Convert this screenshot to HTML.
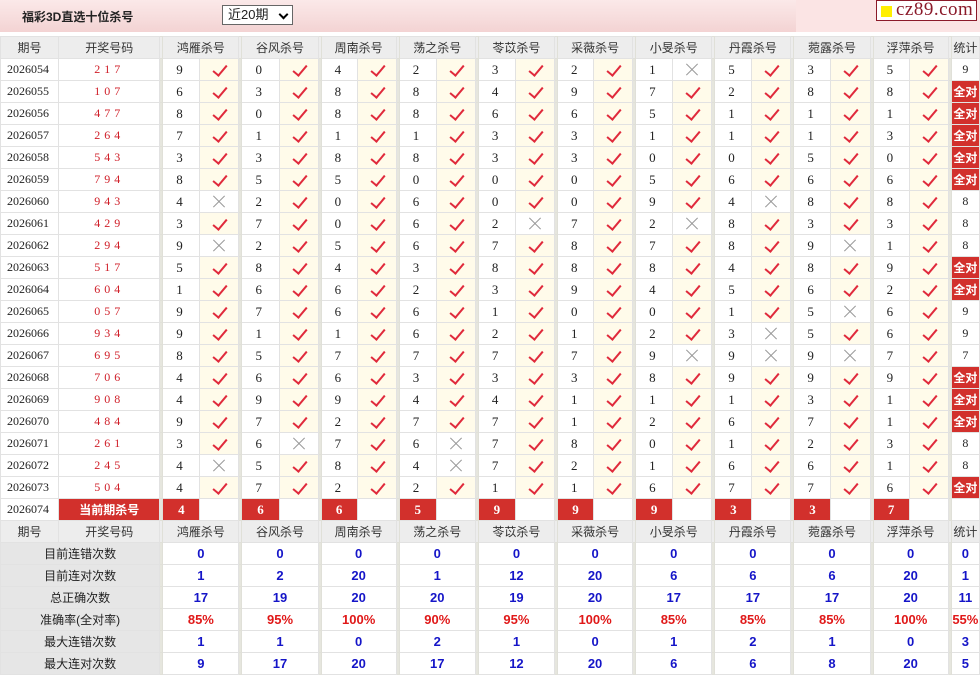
<!DOCTYPE html>
<html><head><meta charset="utf-8"><style>
body{margin:0;background:#fff;font-family:"Liberation Sans","Noto Sans CJK SC",sans-serif;font-size:12px;color:#222;width:980px;height:674px;overflow:hidden;position:relative}
.top{position:absolute;left:0;top:0;width:796px;height:32px;background:linear-gradient(#fbe9e9,#f3d3d3)}
.title{position:absolute;left:22px;top:8px;font-weight:bold;font-size:12px;color:#222}
.sel{position:absolute;left:222px;top:5px;border:1px solid #666;background:#fff;font-size:13px;line-height:18px;padding-left:5px;box-sizing:border-box;width:71px;height:20px}
.sel b{position:absolute;right:5px;top:5px;width:5px;height:5px;border-right:2px solid #000;border-bottom:2px solid #000;transform:rotate(45deg)}
.pinkr{position:absolute;left:796px;top:0;width:184px;height:32px;background:#fbe4e4}
.logo{position:absolute;left:876px;top:0;width:101px;height:21px;border:1px solid #8b1a2a;background:#fff;box-sizing:border-box}
.logo i{position:absolute;left:4px;top:5px;width:11px;height:11px;background:#ffef00}
.logo span{position:absolute;left:19px;top:-2px;font-family:"Liberation Serif",serif;font-size:19px;color:#8b1a2a;letter-spacing:0.5px}
table{position:absolute;left:0;top:36px;border-collapse:collapse;table-layout:fixed;width:980px}
td{height:21px;border:1px solid #e2e2e2;padding:0;text-align:center;white-space:nowrap;overflow:hidden;font-size:12px}
tr.h td{background:#ededed;color:#333;font-size:12px}
td.s{background:#e6e6de;border-color:#e0e0d8}
td.q{font-family:"Liberation Serif",serif;font-size:12px;text-align:left;padding-left:6px}
td.w{font-family:"Liberation Serif",serif;color:#d0202a;letter-spacing:4px;font-size:12px}
td.n{font-family:"Liberation Serif",serif;font-size:13px;text-align:left;padding-left:13px}
td.y{background:#fffbea}
td.k{position:relative}
td.y:after{content:"";position:absolute;left:16px;top:3px;width:6px;height:12px;border-right:2px solid #e02a3c;border-bottom:2px solid #e02a3c;transform:rotate(40deg)}
td.x{position:relative}
td.x:before,td.x:after{content:"";position:absolute;left:11px;top:10px;width:16px;height:1px;background:#999;transform:rotate(45deg)}
td.x:after{transform:rotate(-45deg)}
td.t{font-family:"Liberation Serif",serif;font-size:12px}
td.a{background:#d2302c;color:#fff;font-weight:bold;font-size:12px}
td.r{background:#d2302c;color:#fff;font-weight:bold;font-family:"Liberation Serif",serif;font-size:13px}
td.c{background:#d2302c;color:#fff;font-weight:bold}
td.l{background:#e6e6e6;color:#222}
td.v{color:#1515c8;font-weight:bold;font-size:13px}
td.p{color:#e01818;font-weight:bold;font-size:13px}
</style></head><body>
<div class="top"><div class="title">福彩3D直选十位杀号</div><div class="sel">近20期<b></b></div></div>
<div class="pinkr"></div>
<div class="logo"><i></i><span>cz89.com</span></div>
<table>
<colgroup><col style="width:58px"><col style="width:101px"><col style="width:3px">
<col style="width:37px"><col style="width:39px"><col style="width:3px">
<col style="width:37px"><col style="width:39px"><col style="width:3px">
<col style="width:36px"><col style="width:39px"><col style="width:3px">
<col style="width:37px"><col style="width:39px"><col style="width:3px">
<col style="width:37px"><col style="width:39px"><col style="width:3px">
<col style="width:36px"><col style="width:39px"><col style="width:3px">
<col style="width:37px"><col style="width:39px"><col style="width:3px">
<col style="width:37px"><col style="width:39px"><col style="width:3px">
<col style="width:37px"><col style="width:39px"><col style="width:3px">
<col style="width:36px"><col style="width:39px"><col style="width:3px">
<col style="width:28px"></colgroup>
<tr class="h"><td>期号</td><td>开奖号码</td><td class="s"></td><td colspan="2">鸿雁杀号</td><td class="s"></td><td colspan="2">谷风杀号</td><td class="s"></td><td colspan="2">周南杀号</td><td class="s"></td><td colspan="2">荡之杀号</td><td class="s"></td><td colspan="2">苓苡杀号</td><td class="s"></td><td colspan="2">采薇杀号</td><td class="s"></td><td colspan="2">小旻杀号</td><td class="s"></td><td colspan="2">丹霞杀号</td><td class="s"></td><td colspan="2">菀露杀号</td><td class="s"></td><td colspan="2">浮萍杀号</td><td class="s"></td><td>统计</td></tr>
<tr><td class="q">2026054</td><td class="w">217</td><td class="s"></td><td class="n">9</td><td class="k y"></td><td class="s"></td><td class="n">0</td><td class="k y"></td><td class="s"></td><td class="n">4</td><td class="k y"></td><td class="s"></td><td class="n">2</td><td class="k y"></td><td class="s"></td><td class="n">3</td><td class="k y"></td><td class="s"></td><td class="n">2</td><td class="k y"></td><td class="s"></td><td class="n">1</td><td class="x"></td><td class="s"></td><td class="n">5</td><td class="k y"></td><td class="s"></td><td class="n">3</td><td class="k y"></td><td class="s"></td><td class="n">5</td><td class="k y"></td><td class="s"></td><td class="t">9</td></tr>
<tr><td class="q">2026055</td><td class="w">107</td><td class="s"></td><td class="n">6</td><td class="k y"></td><td class="s"></td><td class="n">3</td><td class="k y"></td><td class="s"></td><td class="n">8</td><td class="k y"></td><td class="s"></td><td class="n">8</td><td class="k y"></td><td class="s"></td><td class="n">4</td><td class="k y"></td><td class="s"></td><td class="n">9</td><td class="k y"></td><td class="s"></td><td class="n">7</td><td class="k y"></td><td class="s"></td><td class="n">2</td><td class="k y"></td><td class="s"></td><td class="n">8</td><td class="k y"></td><td class="s"></td><td class="n">8</td><td class="k y"></td><td class="s"></td><td class="a">全对</td></tr>
<tr><td class="q">2026056</td><td class="w">477</td><td class="s"></td><td class="n">8</td><td class="k y"></td><td class="s"></td><td class="n">0</td><td class="k y"></td><td class="s"></td><td class="n">8</td><td class="k y"></td><td class="s"></td><td class="n">8</td><td class="k y"></td><td class="s"></td><td class="n">6</td><td class="k y"></td><td class="s"></td><td class="n">6</td><td class="k y"></td><td class="s"></td><td class="n">5</td><td class="k y"></td><td class="s"></td><td class="n">1</td><td class="k y"></td><td class="s"></td><td class="n">1</td><td class="k y"></td><td class="s"></td><td class="n">1</td><td class="k y"></td><td class="s"></td><td class="a">全对</td></tr>
<tr><td class="q">2026057</td><td class="w">264</td><td class="s"></td><td class="n">7</td><td class="k y"></td><td class="s"></td><td class="n">1</td><td class="k y"></td><td class="s"></td><td class="n">1</td><td class="k y"></td><td class="s"></td><td class="n">1</td><td class="k y"></td><td class="s"></td><td class="n">3</td><td class="k y"></td><td class="s"></td><td class="n">3</td><td class="k y"></td><td class="s"></td><td class="n">1</td><td class="k y"></td><td class="s"></td><td class="n">1</td><td class="k y"></td><td class="s"></td><td class="n">1</td><td class="k y"></td><td class="s"></td><td class="n">3</td><td class="k y"></td><td class="s"></td><td class="a">全对</td></tr>
<tr><td class="q">2026058</td><td class="w">543</td><td class="s"></td><td class="n">3</td><td class="k y"></td><td class="s"></td><td class="n">3</td><td class="k y"></td><td class="s"></td><td class="n">8</td><td class="k y"></td><td class="s"></td><td class="n">8</td><td class="k y"></td><td class="s"></td><td class="n">3</td><td class="k y"></td><td class="s"></td><td class="n">3</td><td class="k y"></td><td class="s"></td><td class="n">0</td><td class="k y"></td><td class="s"></td><td class="n">0</td><td class="k y"></td><td class="s"></td><td class="n">5</td><td class="k y"></td><td class="s"></td><td class="n">0</td><td class="k y"></td><td class="s"></td><td class="a">全对</td></tr>
<tr><td class="q">2026059</td><td class="w">794</td><td class="s"></td><td class="n">8</td><td class="k y"></td><td class="s"></td><td class="n">5</td><td class="k y"></td><td class="s"></td><td class="n">5</td><td class="k y"></td><td class="s"></td><td class="n">0</td><td class="k y"></td><td class="s"></td><td class="n">0</td><td class="k y"></td><td class="s"></td><td class="n">0</td><td class="k y"></td><td class="s"></td><td class="n">5</td><td class="k y"></td><td class="s"></td><td class="n">6</td><td class="k y"></td><td class="s"></td><td class="n">6</td><td class="k y"></td><td class="s"></td><td class="n">6</td><td class="k y"></td><td class="s"></td><td class="a">全对</td></tr>
<tr><td class="q">2026060</td><td class="w">943</td><td class="s"></td><td class="n">4</td><td class="x"></td><td class="s"></td><td class="n">2</td><td class="k y"></td><td class="s"></td><td class="n">0</td><td class="k y"></td><td class="s"></td><td class="n">6</td><td class="k y"></td><td class="s"></td><td class="n">0</td><td class="k y"></td><td class="s"></td><td class="n">0</td><td class="k y"></td><td class="s"></td><td class="n">9</td><td class="k y"></td><td class="s"></td><td class="n">4</td><td class="x"></td><td class="s"></td><td class="n">8</td><td class="k y"></td><td class="s"></td><td class="n">8</td><td class="k y"></td><td class="s"></td><td class="t">8</td></tr>
<tr><td class="q">2026061</td><td class="w">429</td><td class="s"></td><td class="n">3</td><td class="k y"></td><td class="s"></td><td class="n">7</td><td class="k y"></td><td class="s"></td><td class="n">0</td><td class="k y"></td><td class="s"></td><td class="n">6</td><td class="k y"></td><td class="s"></td><td class="n">2</td><td class="x"></td><td class="s"></td><td class="n">7</td><td class="k y"></td><td class="s"></td><td class="n">2</td><td class="x"></td><td class="s"></td><td class="n">8</td><td class="k y"></td><td class="s"></td><td class="n">3</td><td class="k y"></td><td class="s"></td><td class="n">3</td><td class="k y"></td><td class="s"></td><td class="t">8</td></tr>
<tr><td class="q">2026062</td><td class="w">294</td><td class="s"></td><td class="n">9</td><td class="x"></td><td class="s"></td><td class="n">2</td><td class="k y"></td><td class="s"></td><td class="n">5</td><td class="k y"></td><td class="s"></td><td class="n">6</td><td class="k y"></td><td class="s"></td><td class="n">7</td><td class="k y"></td><td class="s"></td><td class="n">8</td><td class="k y"></td><td class="s"></td><td class="n">7</td><td class="k y"></td><td class="s"></td><td class="n">8</td><td class="k y"></td><td class="s"></td><td class="n">9</td><td class="x"></td><td class="s"></td><td class="n">1</td><td class="k y"></td><td class="s"></td><td class="t">8</td></tr>
<tr><td class="q">2026063</td><td class="w">517</td><td class="s"></td><td class="n">5</td><td class="k y"></td><td class="s"></td><td class="n">8</td><td class="k y"></td><td class="s"></td><td class="n">4</td><td class="k y"></td><td class="s"></td><td class="n">3</td><td class="k y"></td><td class="s"></td><td class="n">8</td><td class="k y"></td><td class="s"></td><td class="n">8</td><td class="k y"></td><td class="s"></td><td class="n">8</td><td class="k y"></td><td class="s"></td><td class="n">4</td><td class="k y"></td><td class="s"></td><td class="n">8</td><td class="k y"></td><td class="s"></td><td class="n">9</td><td class="k y"></td><td class="s"></td><td class="a">全对</td></tr>
<tr><td class="q">2026064</td><td class="w">604</td><td class="s"></td><td class="n">1</td><td class="k y"></td><td class="s"></td><td class="n">6</td><td class="k y"></td><td class="s"></td><td class="n">6</td><td class="k y"></td><td class="s"></td><td class="n">2</td><td class="k y"></td><td class="s"></td><td class="n">3</td><td class="k y"></td><td class="s"></td><td class="n">9</td><td class="k y"></td><td class="s"></td><td class="n">4</td><td class="k y"></td><td class="s"></td><td class="n">5</td><td class="k y"></td><td class="s"></td><td class="n">6</td><td class="k y"></td><td class="s"></td><td class="n">2</td><td class="k y"></td><td class="s"></td><td class="a">全对</td></tr>
<tr><td class="q">2026065</td><td class="w">057</td><td class="s"></td><td class="n">9</td><td class="k y"></td><td class="s"></td><td class="n">7</td><td class="k y"></td><td class="s"></td><td class="n">6</td><td class="k y"></td><td class="s"></td><td class="n">6</td><td class="k y"></td><td class="s"></td><td class="n">1</td><td class="k y"></td><td class="s"></td><td class="n">0</td><td class="k y"></td><td class="s"></td><td class="n">0</td><td class="k y"></td><td class="s"></td><td class="n">1</td><td class="k y"></td><td class="s"></td><td class="n">5</td><td class="x"></td><td class="s"></td><td class="n">6</td><td class="k y"></td><td class="s"></td><td class="t">9</td></tr>
<tr><td class="q">2026066</td><td class="w">934</td><td class="s"></td><td class="n">9</td><td class="k y"></td><td class="s"></td><td class="n">1</td><td class="k y"></td><td class="s"></td><td class="n">1</td><td class="k y"></td><td class="s"></td><td class="n">6</td><td class="k y"></td><td class="s"></td><td class="n">2</td><td class="k y"></td><td class="s"></td><td class="n">1</td><td class="k y"></td><td class="s"></td><td class="n">2</td><td class="k y"></td><td class="s"></td><td class="n">3</td><td class="x"></td><td class="s"></td><td class="n">5</td><td class="k y"></td><td class="s"></td><td class="n">6</td><td class="k y"></td><td class="s"></td><td class="t">9</td></tr>
<tr><td class="q">2026067</td><td class="w">695</td><td class="s"></td><td class="n">8</td><td class="k y"></td><td class="s"></td><td class="n">5</td><td class="k y"></td><td class="s"></td><td class="n">7</td><td class="k y"></td><td class="s"></td><td class="n">7</td><td class="k y"></td><td class="s"></td><td class="n">7</td><td class="k y"></td><td class="s"></td><td class="n">7</td><td class="k y"></td><td class="s"></td><td class="n">9</td><td class="x"></td><td class="s"></td><td class="n">9</td><td class="x"></td><td class="s"></td><td class="n">9</td><td class="x"></td><td class="s"></td><td class="n">7</td><td class="k y"></td><td class="s"></td><td class="t">7</td></tr>
<tr><td class="q">2026068</td><td class="w">706</td><td class="s"></td><td class="n">4</td><td class="k y"></td><td class="s"></td><td class="n">6</td><td class="k y"></td><td class="s"></td><td class="n">6</td><td class="k y"></td><td class="s"></td><td class="n">3</td><td class="k y"></td><td class="s"></td><td class="n">3</td><td class="k y"></td><td class="s"></td><td class="n">3</td><td class="k y"></td><td class="s"></td><td class="n">8</td><td class="k y"></td><td class="s"></td><td class="n">9</td><td class="k y"></td><td class="s"></td><td class="n">9</td><td class="k y"></td><td class="s"></td><td class="n">9</td><td class="k y"></td><td class="s"></td><td class="a">全对</td></tr>
<tr><td class="q">2026069</td><td class="w">908</td><td class="s"></td><td class="n">4</td><td class="k y"></td><td class="s"></td><td class="n">9</td><td class="k y"></td><td class="s"></td><td class="n">9</td><td class="k y"></td><td class="s"></td><td class="n">4</td><td class="k y"></td><td class="s"></td><td class="n">4</td><td class="k y"></td><td class="s"></td><td class="n">1</td><td class="k y"></td><td class="s"></td><td class="n">1</td><td class="k y"></td><td class="s"></td><td class="n">1</td><td class="k y"></td><td class="s"></td><td class="n">3</td><td class="k y"></td><td class="s"></td><td class="n">1</td><td class="k y"></td><td class="s"></td><td class="a">全对</td></tr>
<tr><td class="q">2026070</td><td class="w">484</td><td class="s"></td><td class="n">9</td><td class="k y"></td><td class="s"></td><td class="n">7</td><td class="k y"></td><td class="s"></td><td class="n">2</td><td class="k y"></td><td class="s"></td><td class="n">7</td><td class="k y"></td><td class="s"></td><td class="n">7</td><td class="k y"></td><td class="s"></td><td class="n">1</td><td class="k y"></td><td class="s"></td><td class="n">2</td><td class="k y"></td><td class="s"></td><td class="n">6</td><td class="k y"></td><td class="s"></td><td class="n">7</td><td class="k y"></td><td class="s"></td><td class="n">1</td><td class="k y"></td><td class="s"></td><td class="a">全对</td></tr>
<tr><td class="q">2026071</td><td class="w">261</td><td class="s"></td><td class="n">3</td><td class="k y"></td><td class="s"></td><td class="n">6</td><td class="x"></td><td class="s"></td><td class="n">7</td><td class="k y"></td><td class="s"></td><td class="n">6</td><td class="x"></td><td class="s"></td><td class="n">7</td><td class="k y"></td><td class="s"></td><td class="n">8</td><td class="k y"></td><td class="s"></td><td class="n">0</td><td class="k y"></td><td class="s"></td><td class="n">1</td><td class="k y"></td><td class="s"></td><td class="n">2</td><td class="k y"></td><td class="s"></td><td class="n">3</td><td class="k y"></td><td class="s"></td><td class="t">8</td></tr>
<tr><td class="q">2026072</td><td class="w">245</td><td class="s"></td><td class="n">4</td><td class="x"></td><td class="s"></td><td class="n">5</td><td class="k y"></td><td class="s"></td><td class="n">8</td><td class="k y"></td><td class="s"></td><td class="n">4</td><td class="x"></td><td class="s"></td><td class="n">7</td><td class="k y"></td><td class="s"></td><td class="n">2</td><td class="k y"></td><td class="s"></td><td class="n">1</td><td class="k y"></td><td class="s"></td><td class="n">6</td><td class="k y"></td><td class="s"></td><td class="n">6</td><td class="k y"></td><td class="s"></td><td class="n">1</td><td class="k y"></td><td class="s"></td><td class="t">8</td></tr>
<tr><td class="q">2026073</td><td class="w">504</td><td class="s"></td><td class="n">4</td><td class="k y"></td><td class="s"></td><td class="n">7</td><td class="k y"></td><td class="s"></td><td class="n">2</td><td class="k y"></td><td class="s"></td><td class="n">2</td><td class="k y"></td><td class="s"></td><td class="n">1</td><td class="k y"></td><td class="s"></td><td class="n">1</td><td class="k y"></td><td class="s"></td><td class="n">6</td><td class="k y"></td><td class="s"></td><td class="n">7</td><td class="k y"></td><td class="s"></td><td class="n">7</td><td class="k y"></td><td class="s"></td><td class="n">6</td><td class="k y"></td><td class="s"></td><td class="a">全对</td></tr>
<tr><td class="q">2026074</td><td class="c">当前期杀号</td><td class="s"></td><td class="r">4</td><td></td><td class="s"></td><td class="r">6</td><td></td><td class="s"></td><td class="r">6</td><td></td><td class="s"></td><td class="r">5</td><td></td><td class="s"></td><td class="r">9</td><td></td><td class="s"></td><td class="r">9</td><td></td><td class="s"></td><td class="r">9</td><td></td><td class="s"></td><td class="r">3</td><td></td><td class="s"></td><td class="r">3</td><td></td><td class="s"></td><td class="r">7</td><td></td><td class="s"></td><td></td></tr>
<tr class="h"><td>期号</td><td>开奖号码</td><td class="s"></td><td colspan="2">鸿雁杀号</td><td class="s"></td><td colspan="2">谷风杀号</td><td class="s"></td><td colspan="2">周南杀号</td><td class="s"></td><td colspan="2">荡之杀号</td><td class="s"></td><td colspan="2">苓苡杀号</td><td class="s"></td><td colspan="2">采薇杀号</td><td class="s"></td><td colspan="2">小旻杀号</td><td class="s"></td><td colspan="2">丹霞杀号</td><td class="s"></td><td colspan="2">菀露杀号</td><td class="s"></td><td colspan="2">浮萍杀号</td><td class="s"></td><td>统计</td></tr>
<tr><td class="l" colspan="2">目前连错次数</td><td class="s"></td><td class="v" colspan="2">0</td><td class="s"></td><td class="v" colspan="2">0</td><td class="s"></td><td class="v" colspan="2">0</td><td class="s"></td><td class="v" colspan="2">0</td><td class="s"></td><td class="v" colspan="2">0</td><td class="s"></td><td class="v" colspan="2">0</td><td class="s"></td><td class="v" colspan="2">0</td><td class="s"></td><td class="v" colspan="2">0</td><td class="s"></td><td class="v" colspan="2">0</td><td class="s"></td><td class="v" colspan="2">0</td><td class="s"></td><td class="v">0</td></tr>
<tr><td class="l" colspan="2">目前连对次数</td><td class="s"></td><td class="v" colspan="2">1</td><td class="s"></td><td class="v" colspan="2">2</td><td class="s"></td><td class="v" colspan="2">20</td><td class="s"></td><td class="v" colspan="2">1</td><td class="s"></td><td class="v" colspan="2">12</td><td class="s"></td><td class="v" colspan="2">20</td><td class="s"></td><td class="v" colspan="2">6</td><td class="s"></td><td class="v" colspan="2">6</td><td class="s"></td><td class="v" colspan="2">6</td><td class="s"></td><td class="v" colspan="2">20</td><td class="s"></td><td class="v">1</td></tr>
<tr><td class="l" colspan="2">总正确次数</td><td class="s"></td><td class="v" colspan="2">17</td><td class="s"></td><td class="v" colspan="2">19</td><td class="s"></td><td class="v" colspan="2">20</td><td class="s"></td><td class="v" colspan="2">20</td><td class="s"></td><td class="v" colspan="2">19</td><td class="s"></td><td class="v" colspan="2">20</td><td class="s"></td><td class="v" colspan="2">17</td><td class="s"></td><td class="v" colspan="2">17</td><td class="s"></td><td class="v" colspan="2">17</td><td class="s"></td><td class="v" colspan="2">20</td><td class="s"></td><td class="v">11</td></tr>
<tr><td class="l" colspan="2">准确率(全对率)</td><td class="s"></td><td class="p" colspan="2">85%</td><td class="s"></td><td class="p" colspan="2">95%</td><td class="s"></td><td class="p" colspan="2">100%</td><td class="s"></td><td class="p" colspan="2">90%</td><td class="s"></td><td class="p" colspan="2">95%</td><td class="s"></td><td class="p" colspan="2">100%</td><td class="s"></td><td class="p" colspan="2">85%</td><td class="s"></td><td class="p" colspan="2">85%</td><td class="s"></td><td class="p" colspan="2">85%</td><td class="s"></td><td class="p" colspan="2">100%</td><td class="s"></td><td class="p">55%</td></tr>
<tr><td class="l" colspan="2">最大连错次数</td><td class="s"></td><td class="v" colspan="2">1</td><td class="s"></td><td class="v" colspan="2">1</td><td class="s"></td><td class="v" colspan="2">0</td><td class="s"></td><td class="v" colspan="2">2</td><td class="s"></td><td class="v" colspan="2">1</td><td class="s"></td><td class="v" colspan="2">0</td><td class="s"></td><td class="v" colspan="2">1</td><td class="s"></td><td class="v" colspan="2">2</td><td class="s"></td><td class="v" colspan="2">1</td><td class="s"></td><td class="v" colspan="2">0</td><td class="s"></td><td class="v">3</td></tr>
<tr><td class="l" colspan="2">最大连对次数</td><td class="s"></td><td class="v" colspan="2">9</td><td class="s"></td><td class="v" colspan="2">17</td><td class="s"></td><td class="v" colspan="2">20</td><td class="s"></td><td class="v" colspan="2">17</td><td class="s"></td><td class="v" colspan="2">12</td><td class="s"></td><td class="v" colspan="2">20</td><td class="s"></td><td class="v" colspan="2">6</td><td class="s"></td><td class="v" colspan="2">6</td><td class="s"></td><td class="v" colspan="2">8</td><td class="s"></td><td class="v" colspan="2">20</td><td class="s"></td><td class="v">5</td></tr>
</table>
</body></html>
